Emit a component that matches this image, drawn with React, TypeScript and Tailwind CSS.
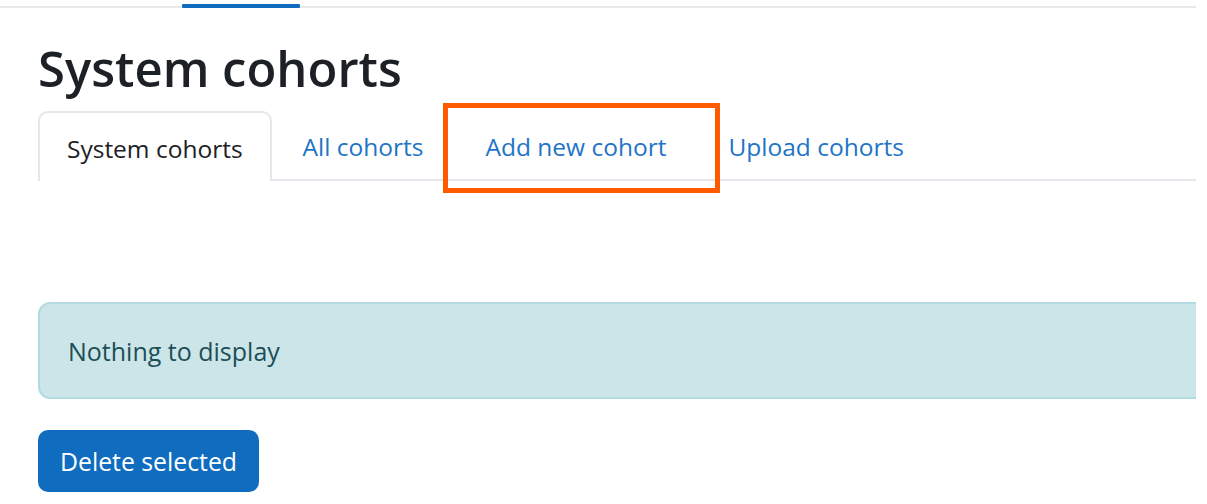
import React from "react";

export default function App() {
  const font = { fontFamily: '"Open Sans", "Noto Sans", sans-serif' };
  return (
    <div className="w-[1207px] h-[504px] bg-white overflow-hidden" style={font}>
      <div className="w-[1196px] h-[8px] border-b-2 border-[#e6e8eb] flex items-end">
        <div className="ml-[182px] w-[118px] h-[4px] bg-[#0f6cbf] mb-[-2px] rounded-[1px]" />
      </div>
      <div className="w-[1196px] pl-[38px] overflow-hidden">
        <h2 className="mt-[30px] text-[49px] leading-[60px] font-semibold text-[#1d2125]">
          System cohorts
        </h2>
        <div className="relative mt-[15px] flex items-end h-[68px] border-b-2 border-[#e4e7eb]">
          <div className="h-[70px] mb-[-2px] px-[27px] border-2 border-b-0 border-[#e4e7eb] rounded-t-[10px] bg-white flex items-center pt-[5px] text-[24.5px] text-[#1d2125]">
            System cohorts
          </div>
          <div className="h-[68px] px-[31px] flex items-center pt-[5px] text-[24.5px] text-[#1f74c7]">
            All cohorts
          </div>
          <div className="h-[68px] px-[31px] flex items-center pt-[5px] text-[24.5px] text-[#1f74c7]">
            Add new cohort
          </div>
          <div className="h-[68px] px-[31px] flex items-center pt-[5px] text-[24.5px] text-[#1f74c7]">
            Upload cohorts
          </div>
          <div className="absolute left-[405px] top-[-10px] w-[277px] h-[90px] border-[5px] border-[#ff5a00]" />
        </div>
        <div className="mt-[121px] w-[1180px] h-[97px] bg-[#cce5e9] border-2 border-[#b2dae0] rounded-[12px] flex items-center pl-[28px] pt-[2px] text-[25px] text-[#1d4f56]">
          Nothing to display
        </div>
        <button className="mt-[31px] w-[221px] h-[62px] rounded-[10px] bg-[#0f6cbf] text-white text-[24.8px] flex items-center justify-center pt-[2px]">
          Delete selected
        </button>
      </div>
    </div>
  );
}
